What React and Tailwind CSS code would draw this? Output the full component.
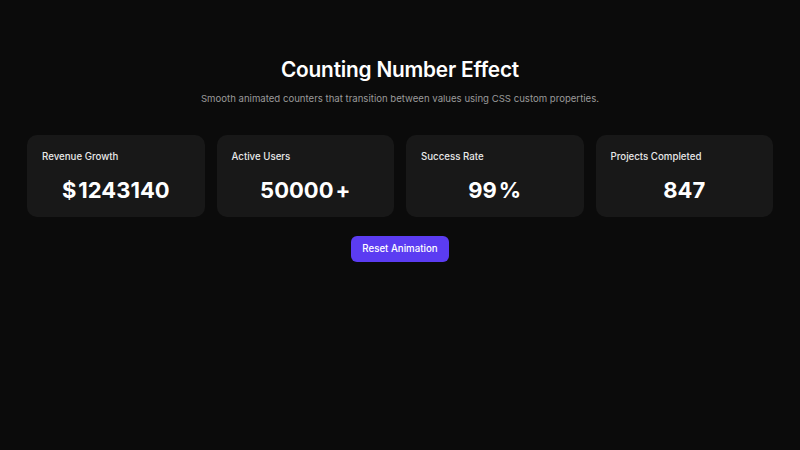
const stats = [
  { label: "Revenue Growth", prefix: "$", value: "1243140", suffix: "" },
  { label: "Active Users", prefix: "", value: "50000", suffix: "+" },
  { label: "Success Rate", prefix: "", value: "99", suffix: "%" },
  { label: "Projects Completed", prefix: "", value: "847", suffix: "" },
];

export default function App() {
  return (
    <div
      className="min-h-[450px] w-full bg-[#0b0b0b] text-white flex flex-col items-center pt-[57px] px-[27px]"
      style={{ fontFamily: "Inter, 'Noto Sans', sans-serif" }}
    >
      <h1 className="text-[20.8px] leading-[26px] font-semibold tracking-[-0.2px]">Counting Number Effect</h1>
      <p className="mt-[10px] text-[9.6px] leading-[12px] text-[#9a9a9a]">
        Smooth animated counters that transition between values using CSS custom properties.
      </p>

      <div className="mt-[30px] w-full grid grid-cols-4 gap-[12px]">
        {stats.map((s) => (
          <div key={s.label} className="bg-[#181818] rounded-[10px] h-[82px] px-[15px] pt-[16px]">
            <div className="text-[9.7px] leading-[12px] font-medium text-[#e8e8e8]">{s.label}</div>
            <div className="mt-[14px] flex justify-center items-center gap-[2px] text-[22px] leading-[26px] font-bold">
              {s.prefix && <span>{s.prefix}</span>}
              <span>{s.value}</span>
              {s.suffix && <span>{s.suffix}</span>}
            </div>
          </div>
        ))}
      </div>

      <button className="mt-[19px] bg-[#5b3cf2] hover:bg-[#4f32e0] text-white text-[9.7px] font-medium rounded-[6px] h-[26px] px-[11.5px]">
        Reset Animation
      </button>
    </div>
  );
}
